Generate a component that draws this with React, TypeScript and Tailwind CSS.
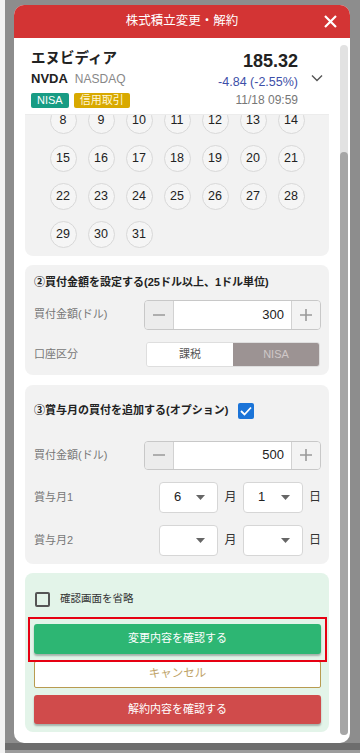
import { useLayoutEffect, useRef } from 'react'

const days = Array.from({ length: 31 }, (_, i) => i + 1)

function Stepper({ value, className }: { value: string; className?: string }) {
  return (
    <div
      className={`flex w-[177px] overflow-hidden rounded-[4px] border border-[#c8c8c8] ${className ?? ''}`}
    >
      <div className="flex w-[29px] items-center justify-center border-r border-[#d2d2d2] bg-[#ececec]">
        <svg width="14" height="14" viewBox="0 0 14 14">
          <path d="M1 7h12" stroke="#9a9a9a" strokeWidth="1.6" />
        </svg>
      </div>
      <div className="flex flex-1 items-center justify-end bg-white pr-[7px] text-[13px] text-[#222]">
        {value}
      </div>
      <div className="flex w-[29px] items-center justify-center border-l border-[#d2d2d2] bg-[#f3f3f3]">
        <svg width="14" height="14" viewBox="0 0 14 14">
          <path d="M1 7h12M7 1v12" stroke="#9a9a9a" strokeWidth="1.6" />
        </svg>
      </div>
    </div>
  )
}

function Select({ value, width }: { value?: string; width: string }) {
  return (
    <div
      className={`flex h-full ${width} items-center justify-between rounded-[4px] border border-[#d6d6d6] bg-white pl-[14px] pr-[12px] text-[13px] text-[#222]`}
    >
      <span>{value ?? ''}</span>
      <svg width="9" height="5" viewBox="0 0 9 5">
        <path d="M0 0h9L4.5 5z" fill="#666" />
      </svg>
    </div>
  )
}

function BonusRow({ label, month, day, className }: { label: string; month?: string; day?: string; className?: string }) {
  return (
    <div className={`flex items-center ${className ?? ''}`}>
      <span className="flex-1 text-[11px] text-[#777]">{label}</span>
      <Select value={month} width="w-[59px]" />
      <span className="w-[25px] text-center text-[12px] text-[#333]">月</span>
      <Select value={day} width="w-[60px]" />
      <span className="w-[18px] text-right text-[12px] text-[#333]">日</span>
    </div>
  )
}

export default function App() {
  const scrollRef = useRef<HTMLDivElement>(null)
  const rowRef = useRef<HTMLDivElement>(null)

  // the sheet is opened already scrolled down to the 8th
  useLayoutEffect(() => {
    const box = scrollRef.current
    const row = rowRef.current
    if (!box || !row) return
    box.scrollTop = row.getBoundingClientRect().top - box.getBoundingClientRect().top + 8
  }, [])

  return (
    <div
      className="flex h-[753px] w-[360px] overflow-hidden bg-[#f2f2f2] text-[#222]"
      style={{ fontFamily: '"Liberation Sans", "Noto Sans CJK JP", sans-serif' }}
    >
      <div className="w-[5px]" />
      <div className="flex flex-1 flex-col bg-[#8d8d8d]">
        <div className="flex-1 pl-[9px] pt-[5px]">
          <div className="flex h-[738px] w-[336px] flex-col overflow-hidden rounded-[10px] bg-white">
            {/* header */}
            <div className="flex h-[33px] items-center bg-[#d33434]">
              <div className="w-[40px]" />
              <div className="flex-1 text-center text-[12.5px] text-white">株式積立変更・解約</div>
              <div className="flex w-[40px] items-center justify-center">
                <svg width="13" height="13" viewBox="0 0 13 13">
                  <path d="M1 1l11 11M12 1L1 12" stroke="#fff" strokeWidth="2.2" />
                </svg>
              </div>
            </div>

            <div className="flex min-h-0 flex-1">
              <div className="flex w-[326px] flex-col">
                {/* stock info */}
                <div className="relative z-10 mx-[11px] flex border-b border-[#ececec] bg-white pb-[6px] pl-[6px] pt-[9px]">
                  <div className="flex-1">
                    <div className="h-[22px] text-[14.5px] font-bold leading-[22px]">エヌビディア</div>
                    <div className="mt-[2px] flex h-[16px] items-center gap-[7px]">
                      <span className="text-[13px] font-bold">NVDA</span>
                      <span className="text-[12px] text-[#888]">NASDAQ</span>
                    </div>
                    <div className="mt-[6px] flex gap-[5px]">
                      <span className="flex h-[15px] items-center rounded-[2px] bg-[#189c84] px-[6px] text-[11px] text-white">
                        NISA
                      </span>
                      <span className="flex h-[15px] items-center rounded-[2px] bg-[#d8a900] px-[6px] text-[11px] text-[#fff8d8]">
                        信用取引
                      </span>
                    </div>
                  </div>
                  <div className="flex flex-col items-end">
                    <div className="mt-[2px] text-[18px] font-bold leading-[24px]">185.32</div>
                    <div className="mt-[1px] text-[12.5px] leading-[16px] text-[#3d4fa8]">-4.84 (-2.55%)</div>
                    <div className="mt-[2px] text-[12px] leading-[16px] text-[#777]">11/18 09:59</div>
                  </div>
                  <div className="ml-[12px] mr-[5px] flex w-[14px] items-center justify-center">
                    <svg width="12" height="8" viewBox="0 0 12 8">
                      <path d="M1 1.5l5 5 5-5" fill="none" stroke="#555" strokeWidth="1.4" />
                    </svg>
                  </div>
                </div>

                {/* scroll body */}
                <div ref={scrollRef} className="min-h-0 flex-1 overflow-hidden px-[11px]">
                  <div className="flex flex-col pb-[14px]">
                    <div className="rounded-[8px] bg-[#f2f2f2] pb-[8px] pt-[9px]">
                      <div className="invisible mb-[10px] pl-[9px] text-[11px] font-bold">①買付日を設定する(毎月)</div>
                      <div className="grid grid-cols-[repeat(7,38px)] justify-center gap-y-[11px]">
                        {days.map((d) => (
                          <div
                            key={d}
                            ref={d === 8 ? rowRef : undefined}
                            className={`flex justify-center ${d < 8 ? 'invisible' : ''}`}
                          >
                            <div className="flex h-[27px] w-[27px] items-center justify-center rounded-full border border-[#d8d8d8] bg-[#f5f5f5] text-[12.5px] text-[#222]">
                              {d}
                            </div>
                          </div>
                        ))}
                      </div>
                    </div>

                    <div className="mt-[9px] rounded-[8px] bg-[#f2f2f2] pb-[8px] pl-[9px] pr-[8px] pt-[9px]">
                      <div className="h-[16px] text-[11px] font-bold leading-[16px]">
                        ②買付金額を設定する(25ドル以上、1ドル単位)
                      </div>
                      <div className="mt-[10px] flex items-center">
                        <span className="flex-1 text-[11px] text-[#777]">買付金額(ドル)</span>
                        <Stepper value="300" className="h-[30px]" />
                      </div>
                      <div className="mt-[12px] flex items-center">
                        <span className="flex-1 text-[11px] text-[#777]">口座区分</span>
                        <div className="mr-[1px] flex h-[25px] w-[174px] overflow-hidden rounded-[3px] border border-[#dedede]">
                          <div className="flex flex-1 items-center justify-center bg-white text-[11px] text-[#555]">課税</div>
                          <div className="flex flex-1 items-center justify-center bg-[#9c9393] text-[11px] text-[#cfc8c8]">NISA</div>
                        </div>
                      </div>
                    </div>

                    <div className="mt-[10px] rounded-[8px] bg-[#f2f2f2] pb-[8px] pl-[9px] pr-[8px] pt-[18px]">
                      <div className="flex h-[16px] items-center gap-[10px]">
                        <span className="text-[11px] font-bold">③賞与月の買付を追加する(オプション)</span>
                        <span className="flex h-[16px] w-[16px] items-center justify-center rounded-[2px] bg-[#1b74d8]">
                          <svg width="12" height="10" viewBox="0 0 12 10">
                            <path d="M1 5l3.5 3.5L11 1.5" fill="none" stroke="#fff" strokeWidth="1.8" />
                          </svg>
                        </span>
                      </div>
                      <div className="mt-[22px] flex items-center">
                        <span className="flex-1 text-[11px] text-[#777]">買付金額(ドル)</span>
                        <Stepper value="500" className="h-[29px]" />
                      </div>
                      <BonusRow label="賞与月1" month="6" day="1" className="mt-[12px] h-[31px]" />
                      <BonusRow label="賞与月2" className="mt-[12px] h-[31px]" />
                    </div>

                    <div className="mt-[9px] rounded-[8px] bg-[#e3f4e9] pb-[8px] pl-[9px] pr-[8px] pt-[19px]">
                      <div className="flex h-[15px] items-center">
                        <span className="ml-[1px] h-[15px] w-[15px] rounded-[2px] border-2 border-[#555]" />
                        <span className="ml-[10px] text-[10.5px] text-[#333]">確認画面を省略</span>
                      </div>
                      <div className="relative mt-[17px]">
                        <button className="flex h-[30px] w-full items-center justify-center rounded-[3px] bg-[#2db673] text-[11px] text-white shadow-[0_2px_2px_rgba(0,0,0,0.28)]">
                          変更内容を確認する
                        </button>
                        <div className="absolute -bottom-[8px] -left-[6px] -right-[6px] -top-[7px] border-2 border-[#e60012]" />
                      </div>
                      <button className="mt-[7px] flex h-[27px] w-full items-center justify-center rounded-[2px] border-[1.5px] border-[#b89b50] bg-white text-[11.5px] text-[#c0a367]">
                        キャンセル
                      </button>
                      <button className="mt-[7px] flex h-[29px] w-full items-center justify-center rounded-[3px] bg-[#d04b4b] text-[11px] text-white shadow-[0_2px_2px_rgba(0,0,0,0.28)]">
                        解約内容を確認する
                      </button>
                    </div>
                  </div>
                </div>
              </div>

              {/* scrollbar */}
              <div className="flex w-[10px] flex-col pb-[8px] pr-[2px] pt-[7px]">
                <div className="flex flex-1 flex-col rounded-full bg-[#e2e2e2]">
                  <div className="h-[107px]" />
                  <div className="flex-1 rounded-full bg-[#a6a6a6]" />
                </div>
              </div>
            </div>
          </div>
        </div>
        <div className="h-[7px] bg-[#6d6d6d]" />
        <div className="h-[3px] bg-[#9c9c9c]" />
      </div>
    </div>
  )
}
